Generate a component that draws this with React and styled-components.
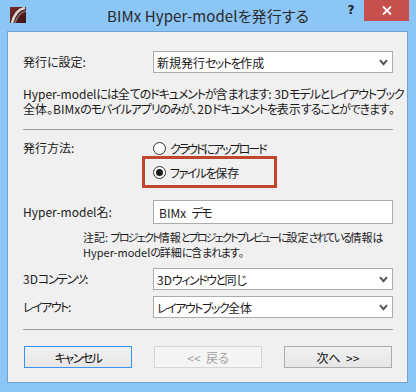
import styled, { createGlobalStyle } from "styled-components";

const GlobalStyle = createGlobalStyle`
  html, body {
    margin: 0;
    padding: 0;
    background: #8cc6f7;
  }
  * {
    box-sizing: border-box;
  }
`;

const font = `"Noto Sans CJK JP", "Noto Sans", sans-serif`;

const Window = styled.div`
  width: 416px;
  height: 392px;
  display: flex;
  flex-direction: column;
  background: #8cc6f7;
  font-family: ${font};
  font-feature-settings: "palt";
  color: #1a1a1a;
`;

const TitleBar = styled.div`
  position: relative;
  height: 31px;
  display: flex;
  align-items: center;
  justify-content: center;
`;

const AppIcon = styled.svg`
  position: absolute;
  left: 10px;
  top: 7px;
`;

const Title = styled.div`
  font-size: 15px;
  color: #2a2a2a;
  letter-spacing: 0.1px;
  margin-top: -1px;
`;

const HelpButton = styled.div`
  position: absolute;
  left: 344px;
  top: 0;
  width: 14px;
  height: 20px;
  display: flex;
  align-items: center;
  justify-content: center;
  font-family: "DejaVu Sans", sans-serif;
  font-weight: bold;
  font-size: 12px;
  color: #222;
`;

const CloseButton = styled.div`
  position: absolute;
  left: 364px;
  top: 0;
  width: 45px;
  height: 21px;
  background: #c7504f;
  display: flex;
  align-items: center;
  justify-content: center;
`;

const Panel = styled.div`
  flex: 1;
  margin: 0 8px 9px 7px;
  background: #f0f0f0;
  border: 1px solid #6fa3d6;
  padding: 19px 14px 0 15px;
  display: flex;
  flex-direction: column;
  font-size: 12px;
`;

// kana in the dialog font are much narrower than in Noto
const Kana = styled.span`
  display: inline-block;
  line-height: 15px;
  letter-spacing: ${(p) => p.$ls}px;
`;

const KANA_RUN = /([\u3041-\u30ff]+)/;

function Jp({ text, ls = -1.5 }) {
  return text.split(KANA_RUN).map((part, i) =>
    i % 2 === 1 ? (
      <Kana key={i} $ls={ls}>
        {part}
      </Kana>
    ) : (
      part
    )
  );
}

const FieldRow = styled.div`
  display: grid;
  grid-template-columns: 130px 1fr;
  align-items: center;
  margin-top: ${(p) => p.$top || 0}px;
`;

const Label = styled.div`
  font-size: 12px;
  line-height: 16px;
  white-space: nowrap;
`;

const SelectBox = styled.div`
  height: 22px;
  background: #fff;
  border: 1px solid #acacac;
  display: flex;
  align-items: center;
  justify-content: space-between;
  padding: 0 4px 0 3px;
  font-size: 12px;
`;

const TextBox = styled.div`
  height: 24px;
  background: #fff;
  border: 1px solid #acacac;
  display: flex;
  align-items: center;
  padding: 0 5px;
  font-size: 12px;
  white-space: pre;
`;

const Paragraph = styled.div`
  font-size: ${(p) => p.$size || 12}px;
  margin-top: ${(p) => p.$top || 0}px;
  padding-left: ${(p) => p.$indent || 0}px;
`;

const Line = styled.div`
  height: 15px;
  line-height: 15px;
  white-space: nowrap;
`;

const Separator = styled.div`
  height: 1px;
  background: #a0a0a0;
  margin-top: ${(p) => p.$top}px;
`;

const RadioGroup = styled.div`
  display: grid;
  grid-template-columns: 130px 1fr;
  margin-top: 10px;
`;

const RadioList = styled.div`
  display: flex;
  flex-direction: column;
  gap: 8px;
`;

const RadioRow = styled.label`
  position: relative;
  display: flex;
  align-items: center;
  gap: 4px;
  height: 16px;
  font-size: 12px;
`;

const RadioCircle = styled.span`
  width: 13px;
  height: 13px;
  border-radius: 50%;
  border: 1px solid #333;
  background: #fff;
  display: flex;
  align-items: center;
  justify-content: center;
  &::after {
    content: "";
    width: 7px;
    height: 7px;
    border-radius: 50%;
    background: ${(p) => (p.$checked ? "#1c1c1c" : "transparent")};
  }
`;

const Highlight = styled.span`
  position: absolute;
  left: -11px;
  top: -8px;
  width: 135px;
  height: 32px;
  border: 3px solid #c0462e;
  pointer-events: none;
`;

const ButtonBar = styled.div`
  display: flex;
  justify-content: space-between;
  padding: 0 1px 0 1px;
  margin-top: 16px;
`;

const Button = styled.div`
  width: 108px;
  height: 22px;
  display: flex;
  align-items: center;
  justify-content: center;
  font-size: 12px;
  white-space: pre;
  border: 1px solid ${(p) => (p.$focus ? "#3c93ec" : p.$disabled ? "#d6d6d6" : "#acacac")};
  background: ${(p) =>
    p.$disabled ? "#f4f4f4" : "linear-gradient(#f1f1f1, #e6e6e6)"};
  color: ${(p) => (p.$disabled ? "#a3a3a3" : "#111")};
`;

function Chevron() {
  return (
    <svg width="9" height="7" viewBox="0 0 9 7">
      <path d="M1 1.2 L4.5 5.2 L8 1.2" fill="none" stroke="#555" strokeWidth="2" />
    </svg>
  );
}

function Select({ value }) {
  return (
    <SelectBox>
      <span>
        <Jp text={value} />
      </span>
      <Chevron />
    </SelectBox>
  );
}

export default function App() {
  return (
    <Window>
      <GlobalStyle />
      <TitleBar>
        <AppIcon width="16" height="16" viewBox="0 0 16 16">
          <defs>
            <linearGradient id="ic" x1="0" y1="0" x2="1" y2="1">
              <stop offset="0" stopColor="#7a2a2a" />
              <stop offset="1" stopColor="#3a1414" />
            </linearGradient>
          </defs>
          <rect width="16" height="16" fill="url(#ic)" />
          <path d="M2 16 C4 8 8 2 15 1" fill="none" stroke="#d8d8d8" strokeWidth="2.5" />
          <path d="M5 16 C7 10 11 5 16 4" fill="none" stroke="#8a8a8a" strokeWidth="1.2" />
        </AppIcon>
        <Title>BIMx Hyper-modelを発行する</Title>
        <HelpButton>?</HelpButton>
        <CloseButton>
          <svg width="10" height="9" viewBox="0 0 10 9">
            <path d="M1 0.5 L9 8.5 M9 0.5 L1 8.5" stroke="#fff" strokeWidth="1.8" />
          </svg>
        </CloseButton>
      </TitleBar>
      <Panel>
        <FieldRow>
          <Label>発行に設定:</Label>
          <Select value="新規発行セットを作成" />
        </FieldRow>
        <Paragraph $top={13}>
          <Line>
            <Jp ls={-1.1} text="Hyper-modelには全てのドキュメントが含まれます: 3Dモデルとレイアウトブック" />
          </Line>
          <Line>
            <Jp ls={-1.1} text="全体。BIMxのモバイルアプリのみが、2Dドキュメントを表示することができます。" />
          </Line>
        </Paragraph>
        <Separator $top={13} />
        <RadioGroup>
          <Label>発行方法:</Label>
          <RadioList>
            <RadioRow>
              <RadioCircle />
              <span>
                <Jp ls={-2} text="クラウドにアップロード" />
              </span>
            </RadioRow>
            <RadioRow>
              <RadioCircle $checked />
              <span>
                <Jp text="ファイルを保存" />
              </span>
              <Highlight />
            </RadioRow>
          </RadioList>
        </RadioGroup>
        <FieldRow $top={20}>
          <Label>Hyper-model名:</Label>
          <TextBox>
            <Jp text="BIMx  デモ" />
          </TextBox>
        </FieldRow>
        <Paragraph $top={6} $indent={60} $size={11}>
          <Line>
            <Jp ls={-1.8} text="注記: プロジェクト情報とプロジェクトプレビューに設定されている情報は" />
          </Line>
          <Line>
            <Jp ls={-1.2} text="Hyper-modelの詳細に含まれます。" />
          </Line>
        </Paragraph>
        <FieldRow $top={8}>
          <Label>
            <Jp text="3Dコンテンツ:" />
          </Label>
          <Select value="3Dウィンドウと同じ" />
        </FieldRow>
        <FieldRow $top={6}>
          <Label>
            <Jp text="レイアウト:" />
          </Label>
          <Select value="レイアウトブック全体" />
        </FieldRow>
        <Separator $top={11} />
        <ButtonBar>
          <Button $focus>
            <Jp text="キャンセル" />
          </Button>
          <Button $disabled>{"<<  戻る"}</Button>
          <Button>{"次へ  >>"}</Button>
        </ButtonBar>
      </Panel>
    </Window>
  );
}
